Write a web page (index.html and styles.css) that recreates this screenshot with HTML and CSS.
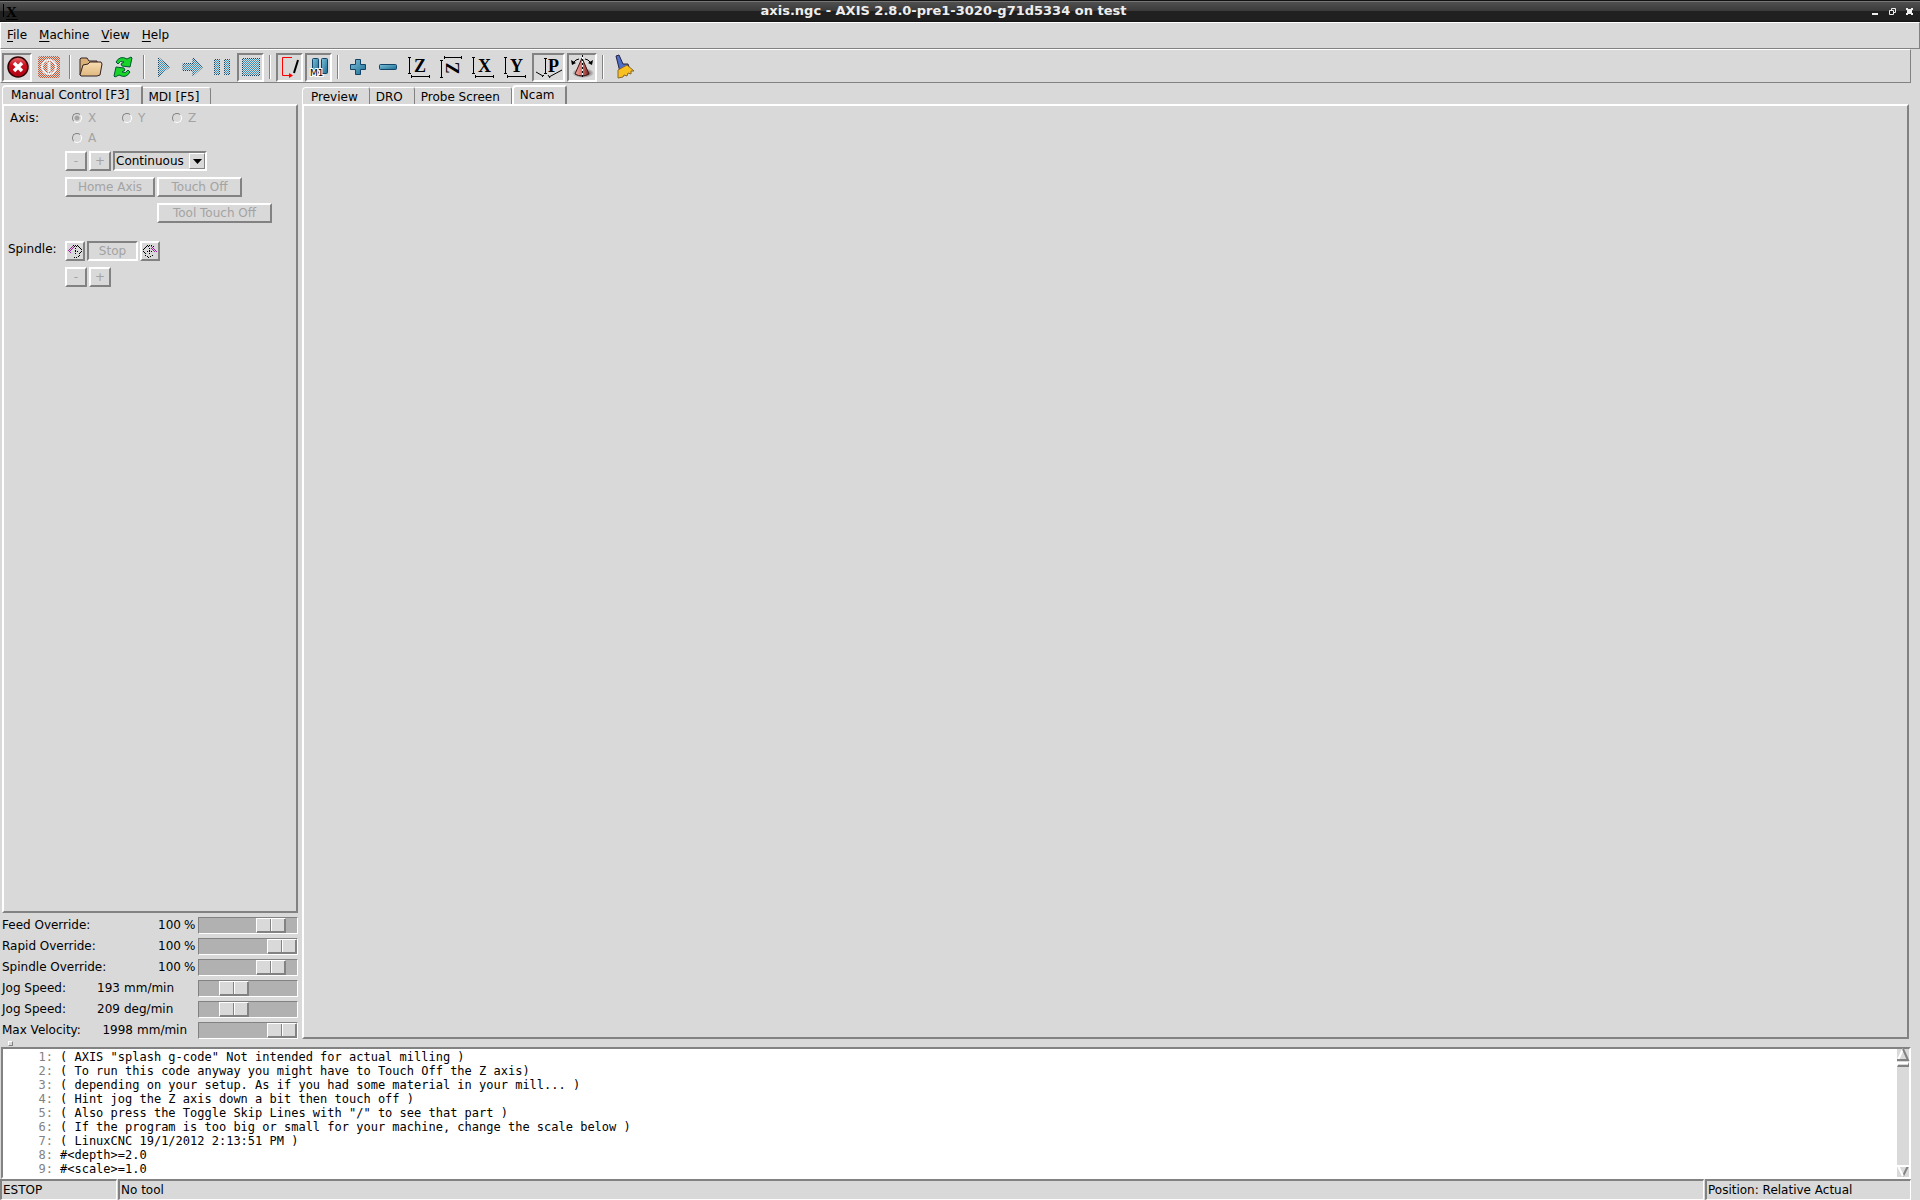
FILE: index.html
```html
<!DOCTYPE html>
<html lang="en">
<head>
<meta charset="utf-8">
<title>axis.ngc - AXIS 2.8.0-pre1-3020-g71d5334 on test</title>
<link rel="stylesheet" href="styles.css">
</head>
<body>
<svg class="defs" width="0" height="0" aria-hidden="true">
  <defs>
    <pattern id="stipple" width="2" height="2" patternUnits="userSpaceOnUse"><path d="M0 0h1v1H0zM1 1h1v1H1z" fill="#d9d9d9"/></pattern>
    <linearGradient id="red" x1="0" y1="0" x2="0" y2="1"><stop offset="0" stop-color="#e87070"/><stop offset=".4" stop-color="#cc1020"/><stop offset="1" stop-color="#b00010"/></linearGradient>
    <linearGradient id="blue" x1="0" y1="0" x2="1" y2="1"><stop offset="0" stop-color="#7cc0d8"/><stop offset="1" stop-color="#1c6c94"/></linearGradient>
    <linearGradient id="tan" x1="0" y1="0" x2="0" y2="1"><stop offset="0" stop-color="#f8dcb0"/><stop offset="1" stop-color="#e0b880"/></linearGradient>
    <linearGradient id="cone" x1="0" y1="0" x2="1" y2="0"><stop offset="0" stop-color="#f0a8a0"/><stop offset=".5" stop-color="#d87068"/><stop offset="1" stop-color="#6c2020"/></linearGradient>
    <radialGradient id="shade"><stop offset="0" stop-color="#000"/><stop offset="1" stop-color="#000" stop-opacity="0"/></radialGradient>
  </defs>
</svg>
<header class="titlebar">
  <svg class="app-icon" width="16" height="18" viewBox="0 0 16 18"><text x="3" y="14" class="app-glyph">X</text><path d="M.5 1v13M3 16.500h12" stroke="#000"/></svg>
  <h1>axis.ngc - AXIS 2.8.0-pre1-3020-g71d5334 on test</h1>
  <div class="window-buttons">
    <button aria-label="Minimize"><svg width="7" height="7"><path d="M0 5h6v2H0z" fill="#eee"/></svg></button>
    <button aria-label="Restore"><svg width="7" height="7"><path d="M2.500 2.500v-2h4v4h-2M.5 2.500h4v4h-4z" fill="none" stroke="#eee"/></svg></button>
    <button aria-label="Close"><svg width="7" height="7"><path d="M0 0h2v1h3V0h2v2H6v3h1v2H5V6H2v1H0V5h1V2H0z" fill="#eee"/></svg></button>
  </div>
</header>
<nav class="menubar">
  <button><u>F</u>ile</button><button><u>M</u>achine</button><button><u>V</u>iew</button><button><u>H</u>elp</button>
</nav>
<div class="toolbar" role="toolbar" aria-label="Machine tools">
  <button class="tool pressed" aria-label="Emergency stop"><svg width="24" height="22"><circle cx="13" cy="11" r="10" fill="url(#red)" stroke="#300" stroke-width="1.500"/><path d="M9 7l8 8M17 7l-8 8" stroke="#fff" stroke-width="3.500"/></svg></button>
  <button class="tool" aria-label="Machine power" disabled><svg width="22" height="22"><rect width="22" height="22" rx="3" fill="#c85838"/><circle cx="11" cy="11" r="7" fill="none" stroke="#fff" stroke-width="2"/><path d="M11 6v10" stroke="#fff" stroke-width="3"/><rect width="22" height="22" fill="url(#stipple)"/></svg></button>
  <span class="sep"></span>
  <button class="tool" aria-label="Open"><svg width="24" height="22"><path d="M1 19V3l1-1h6l2 3h8v3" fill="#d8b078" stroke="#322"/><path d="M1 19l3-10 5-1 2-2h11l1 2-2 11-3 1H2z" fill="url(#tan)" stroke="#322"/></svg></button>
  <button class="tool" aria-label="Reload"><svg width="22" height="22"><g fill="#18d428" stroke="#053"><path id="arr" d="M4 6Q8-1 15 3l4-2 1 1-2 9-8-1-1-2 3-2Q8 4 6 8z"/><use href="#arr" transform="rotate(180 11 11)"/></g></svg></button>
  <span class="sep"></span>
  <button class="tool narrow" aria-label="Run" disabled><svg width="14" height="22"><path d="M1.500 1.500l11 9.500-11 9.500z" fill="#3f90b8" stroke="#146"/><rect width="14" height="22" fill="url(#stipple)"/></svg></button>
  <button class="tool narrow" aria-label="Step" disabled><svg width="22" height="22"><path d="M1 7.500h10V2l9.500 9-9.500 9v-5.500H1z" fill="#3f90b8" stroke="#146"/><rect width="22" height="22" fill="url(#stipple)"/></svg></button>
  <button class="tool narrow" aria-label="Pause" disabled><svg width="18" height="18"><path d="M1.500 1.500h5v15h-5zM11.500 1.500h5v15h-5z" fill="#3f90b8" stroke="#146"/><rect width="18" height="18" fill="url(#stipple)"/></svg></button>
  <button class="tool narrow pressed" aria-label="Stop" disabled><svg width="18" height="18"><rect x=".5" y=".5" width="17" height="17" fill="#3f90b8" stroke="#146"/><rect width="18" height="18" fill="url(#stipple)"/></svg></button>
  <span class="sep"></span>
  <button class="tool narrow pressed" aria-label="Skip lines"><svg width="20" height="22"><path d="M12 1.500H2.500v18H10" fill="none" stroke="#f00"/><path d="M9 17l4 2.500L9 22z" fill="#f00"/><path d="M14 17l4-13" stroke="#000" stroke-width="2"/></svg></button>
  <button class="tool narrow pressed" aria-label="Optional pause"><svg width="22" height="22"><rect x="4.500" y="2.500" width="6" height="15" rx="1" fill="url(#blue)" stroke="#146"/><rect x="13.500" y="2.500" width="6" height="15" rx="1" fill="url(#blue)" stroke="#146"/><text x="2" y="20" class="m1">M1</text></svg></button>
  <span class="sep"></span>
  <button class="tool zoom" aria-label="Zoom in"><svg width="18" height="18"><path d="M6.500 1.500h5v5h5v5h-5v5h-5v-5h-5v-5h5z" fill="url(#blue)" stroke="#146" stroke-linejoin="round"/></svg></button>
  <button class="tool zoom" aria-label="Zoom out"><svg width="18" height="18"><rect x=".5" y="6.500" width="17" height="5" rx="1" fill="url(#blue)" stroke="#146"/></svg></button>
  <button class="tool" aria-label="Top view"><svg width="22" height="22"><path class="axis" d="M1.500 1v17M0 1.500h3M0 17.500h3M3 20.500h19M3.500 19v3M21.500 19v3"/><text x="6" y="16" class="letter">Z</text></svg></button>
  <button class="tool" aria-label="Rotated top view"><svg width="22" height="22"><path class="axis" d="M1.500 4v17M0 4.500h3M0 21.500h3M4 1.500h18M4.500 0v3M21.500 0v3"/><text x="-18" y="19" class="letter" transform="rotate(-90)">Z</text></svg></button>
  <button class="tool" aria-label="Side view"><svg width="22" height="22"><path class="axis" d="M1.500 1v17M0 1.500h3M0 17.500h3M3 20.500h19M3.500 19v3M21.500 19v3"/><text x="6" y="16" class="letter">X</text></svg></button>
  <button class="tool" aria-label="Front view"><svg width="22" height="22"><path class="axis" d="M1.500 1v17M0 1.500h3M0 17.500h3M3 20.500h19M3.500 19v3M21.500 19v3"/><text x="6" y="16" class="letter">Y</text></svg></button>
  <button class="tool wide pressed" aria-label="Perspective view"><svg width="28" height="24"><path class="axis" d="M10.500 3v15M9 3.500h3M9 18.500h3M1 17l7 4M7 22l2-2M14 22l13-7M13 20l2 3"/><text x="13" y="17" class="letter">P</text></svg></button>
  <button class="tool pressed" aria-label="Rotate view"><svg width="24" height="24"><ellipse cx="13" cy="18" rx="11" ry="5" fill="url(#shade)"/><path d="M12 3l7 16q-7 4-14 0z" fill="url(#cone)" stroke="#411"/><path d="M3 8q3-4 6-4M21 8q-3-4-6-4" stroke="#000" fill="none"/><path d="M1 5l5 3-4 2zM23 5l-5 3 4 2z"/><path d="M12.500 0v22" stroke="#fff"/><path d="M12.500 0v22" stroke="#000" stroke-dasharray="2 2"/></svg></button>
  <span class="sep"></span>
  <button class="tool" aria-label="Clear plot"><svg width="22" height="24"><path d="M3 1l3-1 4 9 5 0 1 3-9 5-1-4z" fill="#5070c8" stroke="#224"/><path d="M5 15l9-5 7 6-3 0 0 3-3-1-1 3-3-1-1 2-5 1z" fill="#f8c020" stroke="#863"/></svg></button>
</div>
<main class="workspace">
  <section class="left">
    <div class="tabs" role="tablist">
      <button class="tab active" role="tab" aria-selected="true">Manual Control [F3]</button><button class="tab" role="tab">MDI [F5]</button>
    </div>
    <div class="panel manual">
      <div class="row axis-row">
        <span class="name">Axis:</span>
        <div class="axes">
          <label><input type="radio" name="axis" checked disabled>X</label>
          <label><input type="radio" name="axis" disabled>Y</label>
          <label><input type="radio" name="axis" disabled>Z</label>
          <label><input type="radio" name="axis" disabled>A</label>
        </div>
      </div>
      <div class="row jog"><span class="name"></span>
        <button class="btn small" disabled>-</button><button class="btn small" disabled>+</button>
        <span class="combo"><select aria-label="Jog increment"><option>Continuous</option></select><svg width="16" height="16"><path d="M3 5h9l-4.500 5z"/></svg></span>
      </div>
      <div class="row"><span class="name"></span>
        <div class="offsets">
          <button class="btn" disabled>Home Axis</button><button class="btn touch" disabled>Touch Off</button>
          <button class="btn tool-touch" disabled>Tool Touch Off</button>
        </div>
      </div>
      <div class="row spindle"><span class="name">Spindle:</span>
        <button class="btn icon" aria-label="Spindle counterclockwise"><svg width="16" height="16" shape-rendering="crispEdges"><path d="M1 7h1v1H1zM2 6h1v1H2zM3 5h1v1H3zM4 4h1v1H4zM5 3h1v1H5zM2 8h1v1H2zM3 7h1v1H3zM4 6h1v1H4zM5 5h1v1H5zM6 4h1v1H6zM3 9h1v1H3z" fill="#a020a0"/><path d="M6 2h1v1H6zM8 2h1v1H8zM10 2h1v1h-1zM7 3h1v1H7zM9 3h1v1H9zM11 3h1v1h-1zM12 4h1v1h-1zM13 5h1v1h-1zM14 6h1v1h-1zM14 8h1v1h-1zM13 9h1v1h-1zM12 10h1v1h-1zM12 12h1v1h-1zM11 13h1v1h-1zM9 14h1v1H9zM8 5h1v1H8zM8 7h1v2H8zM8 10h1v1H8zM10 8h1v1h-1zM7 14h1v1H7z"/></svg></button><button class="btn stop" disabled>Stop</button><button class="btn icon" aria-label="Spindle clockwise"><svg width="16" height="16" shape-rendering="crispEdges"><path d="M9 3h1v1H9zM10 4h1v1h-1zM11 5h1v1h-1zM12 6h1v1h-1zM13 7h1v1h-1zM9 5h1v1H9zM10 6h1v1h-1zM11 7h1v1h-1zM12 8h1v1h-1zM14 8h1v1h-1z" fill="#a020a0"/><path d="M5 2h1v1H5zM7 2h1v1H7zM9 2h1v1H9zM4 3h1v1H4zM6 3h1v1H6zM11 3h1v1h-1zM3 4h1v1H3zM2 5h1v1H2zM1 6h1v1H1zM1 8h1v1H1zM2 9h1v1H2zM3 10h1v1H3zM3 12h1v1H3zM5 13h1v1H5zM6 14h1v1H6zM7 5h1v1H7zM7 7h1v2H7zM7 10h1v1H7zM5 8h1v1H5zM9 8h1v1H9zM8 13h1v1H8zM10 12h1v1h-1z"/></svg></button>
      </div>
      <div class="row"><span class="name"></span>
        <button class="btn small" disabled>-</button><button class="btn small" disabled>+</button>
      </div>
    </div>
    <div class="sliders">
      <div class="slide"><label for="feed">Feed Override:</label><output>100</output><span class="unit">%</span><input id="feed" type="range" max="120" value="100"></div>
      <div class="slide"><label for="rapid">Rapid Override:</label><output>100</output><span class="unit">%</span><input id="rapid" type="range" max="100" value="100"></div>
      <div class="slide"><label for="spin">Spindle Override:</label><output>100</output><span class="unit">%</span><input id="spin" type="range" max="120" value="100"></div>
      <div class="slide"><label for="jog">Jog Speed:</label><output>193</output><span class="unit rate">mm/min</span><input id="jog" type="range" max="100" value="30"></div>
      <div class="slide"><label for="jogdeg">Jog Speed:</label><output>209</output><span class="unit rate">deg/min</span><input id="jogdeg" type="range" max="100" value="30"></div>
      <div class="slide"><label for="maxv">Max Velocity:</label><output>1998</output><span class="unit speed">mm/min</span><input id="maxv" type="range" max="100" value="100"></div>
    </div>
  </section>
  <section class="right">
    <div class="tabs" role="tablist">
      <button class="tab" role="tab">Preview</button><button class="tab" role="tab">DRO</button><button class="tab" role="tab">Probe Screen</button><button class="tab active" role="tab" aria-selected="true">Ncam</button>
    </div>
    <div class="panel"></div>
  </section>
</main>
<div class="sash"><span></span></div>
<section class="code">
  <ol>
    <li>( AXIS "splash g-code" Not intended for actual milling )</li>
    <li>( To run this code anyway you might have to Touch Off the Z axis)</li>
    <li>( depending on your setup. As if you had some material in your mill... )</li>
    <li>( Hint jog the Z axis down a bit then touch off )</li>
    <li>( Also press the Toggle Skip Lines with "/" to see that part )</li>
    <li>( If the program is too big or small for your machine, change the scale below )</li>
    <li>( LinuxCNC 19/1/2012 2:13:51 PM )</li>
    <li>#&lt;depth&gt;=2.0</li>
    <li>#&lt;scale&gt;=1.0</li>
  </ol>
  <div class="scrollbar">
    <svg width="12" height="13"><path d="M6 0L0 12h12z" fill="#d9d9d9"/><path d="M6 0L.5 12" stroke="#fff" stroke-width="2"/><path d="M6 0l5 11H0" stroke="#828282" stroke-width="2" fill="none"/></svg>
    <span class="thumb"></span>
    <svg width="12" height="12"><path d="M11 1L6 11" stroke="#828282" stroke-width="2"/><path d="M12 1H1l5 10" stroke="#fff" stroke-width="2" fill="none"/></svg>
  </div>
</section>
<footer class="status"><span class="state">ESTOP</span><span class="tool-name">No tool</span><span class="position">Position: Relative Actual</span></footer>
</body>
</html>
```
FILE: styles.css
```css
:root { --bg: #d9d9d9; --dark: #828282; --light: #fff; --off: #a3a3a3; }
* { box-sizing: border-box; }
body {
  margin: 0; min-height: 100vh; display: flex; flex-direction: column;
  background: var(--bg); color: #000; font: 12px/16px "DejaVu Sans", sans-serif;
}
button, select, input { font: inherit; color: inherit; margin: 0; padding: 0; border: 0; background: none; border-radius: 0; }
svg { display: block; overflow: visible; }
.defs { position: absolute; }

.titlebar {
  height: 22px; display: flex; align-items: center; padding: 0 7px 0 3px; color: #eee;
  border-top: 1px solid #111;
  background: linear-gradient(#777 0, #777 1px, #505050 1px, #3a3a3a 10px, #202020 10px, #202020 19px, #111 21px);
}
.titlebar h1 { flex: 1; margin: 0; padding: 0 4px 1px 0; font-size: 13px; line-height: 16px; text-align: center; }
.app-glyph { font: bold 15px "Liberation Serif", serif; }
.window-buttons { display: flex; gap: 10px; }

.menubar {
  height: 27px; display: flex; align-items: center; gap: 12px; padding: 0 0 2px 6px;
  border: 1px solid; border-color: var(--light) var(--dark) var(--dark) var(--light);
}
.menubar u { text-underline-offset: 2px; }

.toolbar {
  height: 34px; margin-right: 9px; display: flex; align-items: center; gap: 2px; padding: 2px 0 0 1px;
  border: 1px solid; border-color: var(--light) var(--dark) var(--dark) var(--light);
}
.tool { width: 30px; height: 29px; display: flex; align-items: center; justify-content: center; border: 2px solid transparent; }
.tool svg { flex: none; }
.tool.narrow { width: 27px; }
.tool.zoom { width: 28px; }
.tool.wide { width: 33px; }
.tool.pressed { border-color: var(--dark) var(--light) var(--light) var(--dark); }
.sep { width: 2px; height: 24px; margin: 0 3px; border-left: 1px solid var(--dark); border-right: 1px solid var(--light); }
.letter { font: bold 18px "Liberation Serif", serif; }
.axis { fill: none; stroke: #000; }
.m1 { font: 9px "DejaVu Sans", sans-serif; stroke: #fff; stroke-width: 2px; paint-order: stroke; }

.workspace { flex: 1; display: flex; gap: 4px; margin-right: 11px; padding-left: 2px; }
.left { width: 296px; display: flex; flex-direction: column; }
.right { flex: 1; display: flex; flex-direction: column; }
.tabs { height: 19px; margin-top: 2px; display: flex; align-items: flex-end; }
.tab {
  height: 17px; padding: 0 11px 0 6px; line-height: 18px; white-space: nowrap;
  border-top: 1px solid var(--light); border-right: 1px solid var(--dark); border-top-right-radius: 3px;
}
.tab.active {
  height: 19px; line-height: 15px;
  border-top: 2px solid var(--light); border-left: 2px solid var(--light); border-right: 2px solid var(--dark);
  border-top-left-radius: 4px;
}
.tab:first-child { padding-left: 8px; border-left: 1px solid var(--light); border-top-left-radius: 4px; }
.panel {
  flex: 1; border: 2px solid; border-color: var(--light) var(--dark) var(--dark) var(--light);
}
.manual { padding: 4px 0 0 4px; }
.row { display: flex; gap: 2px; margin-bottom: 6px; }
.name { width: 55px; flex: none; }
.axis-row { margin-bottom: 5px; }
.axis-row .name { padding-left: 2px; }
.axes { display: grid; grid-template-columns: repeat(3, 50px); row-gap: 4px; padding-left: 7px; color: var(--off); }
.axes label { display: flex; align-items: center; gap: 6px; }
.axes input {
  appearance: none; width: 10px; height: 10px; border: 1px solid; border-radius: 50%;
  border-color: var(--dark) var(--light) var(--light) var(--dark); background: var(--bg);
}
.axes input:checked { background: radial-gradient(var(--off) 2px, var(--bg) 3px); }
.btn {
  height: 20px; padding: 0 10px; line-height: 15px; text-align: center; white-space: nowrap;
  border: 2px solid; border-color: var(--light) var(--dark) var(--dark) var(--light);
}
.btn:disabled { color: var(--off); }
.btn.small { width: 22px; padding: 0; }
.btn.icon { width: 20px; padding: 0; }
.btn.stop { width: 51px; padding: 0; border-color: var(--dark) var(--light) var(--light) var(--dark); }
.combo {
  width: 94px; height: 20px; display: flex; align-items: center;
  border: 2px solid; border-color: var(--dark) var(--light) var(--light) var(--dark);
}
.combo select { appearance: none; flex: 1; min-width: 0; height: 16px; padding-left: 1px; line-height: 16px; }
.combo svg { flex: none; border: 1px solid; border-color: var(--light) var(--dark) var(--dark) var(--light); }
.offsets { display: grid; grid-template-columns: 90px auto; gap: 6px 2px; }
.offsets .btn { padding: 0; }
.offsets .touch { width: 85px; }
.offsets .tool-touch { grid-column: 2; width: 115px; }
.spindle { margin-top: 18px; }

.sliders { display: grid; gap: 4px; padding-top: 4px; }
.slide { height: 17px; display: flex; align-items: center; }
.slide label, .slide output, .unit { padding-bottom: 2px; }
.slide output { flex: 1; text-align: right; }
.unit { width: 17px; padding-left: 3px; }
.unit.rate { width: 78px; padding-left: 4px; }
.unit.speed { width: 65px; padding-left: 4px; }
.slide input {
  appearance: none; width: 100px; height: 17px; background: #b1b1b1;
  border: 1px solid; border-color: var(--dark) var(--light) var(--light) var(--dark);
}
.slide input::-webkit-slider-thumb {
  appearance: none; width: 30px; height: 15px;
  background: linear-gradient(90deg, transparent 13px, var(--dark) 13px, var(--dark) 14px, var(--light) 14px, var(--light) 15px, transparent 15px) var(--bg);
  border: 1px solid; border-color: var(--light) var(--dark) var(--dark) var(--light);
  box-shadow: inset -1px -1px var(--dark);
}

.sash { height: 8px; padding: 2px 8px; }
.sash span { display: block; width: 5px; height: 5px; border: 1px solid; border-color: var(--light) var(--dark) var(--dark) var(--light); }
.code {
  height: 132px; margin: 0 9px 0 1px; display: flex; justify-content: space-between; background: #fff;
  border: 2px solid; border-color: var(--dark) var(--light) var(--light) var(--dark);
}
.code ol { margin: 0; padding: 1px 0 0; list-style: none; counter-reset: line; font: 12px/14px "DejaVu Sans Mono", monospace; }
.code li { counter-increment: line; white-space: pre; }
.code li::before { content: counter(line) ":"; display: inline-block; width: 50px; margin-right: 7px; text-align: right; color: var(--dark); }
.scrollbar { width: 12px; display: flex; flex-direction: column; background: var(--bg); }
.scrollbar .thumb { height: 5px; margin-bottom: auto; border: 1px solid; border-width: 2px 1px; border-color: var(--light) var(--dark) var(--dark) var(--light); }

.status { height: 21px; margin: 0 9px 0 0; display: flex; gap: 1px; line-height: 18px; }
.status span { padding-left: 1px; border: 2px solid; border-bottom-width: 1px; border-right-width: 1px; border-color: var(--dark) var(--light) var(--light) var(--dark); }
.state { width: 117px; }
.tool-name { flex: 1; }
.position { width: 206px; }
```
